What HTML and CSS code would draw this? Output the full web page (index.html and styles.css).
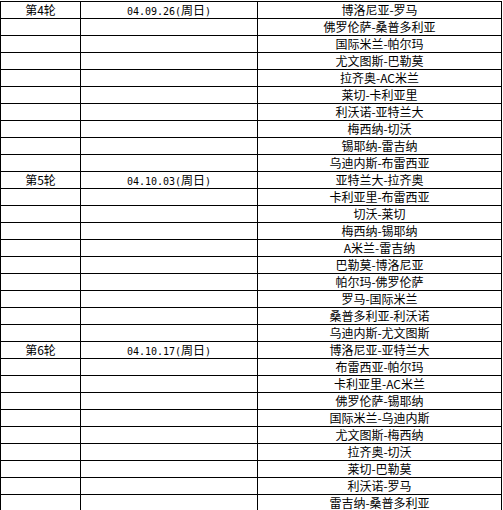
FILE: index.html
```html
<!DOCTYPE html>
<html lang="zh-CN">
<head>
<meta charset="utf-8">
<title>赛程</title>
<link rel="stylesheet" href="styles.css">
</head>
<body>
<table class="sched">
<colgroup><col class="c-round"><col class="c-date"><col class="c-match"></colgroup>
<tbody>
<tr><td>第4轮</td><td><span class="num">04.09.26(</span>周日<span class="num">)</span></td><td>博洛尼亚-罗马</td></tr>
<tr><td></td><td></td><td>佛罗伦萨-桑普多利亚</td></tr>
<tr><td></td><td></td><td>国际米兰-帕尔玛</td></tr>
<tr><td></td><td></td><td>尤文图斯-巴勒莫</td></tr>
<tr><td></td><td></td><td>拉齐奥-AC米兰</td></tr>
<tr><td></td><td></td><td>莱切-卡利亚里</td></tr>
<tr><td></td><td></td><td>利沃诺-亚特兰大</td></tr>
<tr><td></td><td></td><td>梅西纳-切沃</td></tr>
<tr><td></td><td></td><td>锡耶纳-雷吉纳</td></tr>
<tr><td></td><td></td><td>乌迪内斯-布雷西亚</td></tr>
<tr><td>第5轮</td><td><span class="num">04.10.03(</span>周日<span class="num">)</span></td><td>亚特兰大-拉齐奥</td></tr>
<tr><td></td><td></td><td>卡利亚里-布雷西亚</td></tr>
<tr><td></td><td></td><td>切沃-莱切</td></tr>
<tr><td></td><td></td><td>梅西纳-锡耶纳</td></tr>
<tr><td></td><td></td><td>A米兰-雷吉纳</td></tr>
<tr><td></td><td></td><td>巴勒莫-博洛尼亚</td></tr>
<tr><td></td><td></td><td>帕尔玛-佛罗伦萨</td></tr>
<tr><td></td><td></td><td>罗马-国际米兰</td></tr>
<tr><td></td><td></td><td>桑普多利亚-利沃诺</td></tr>
<tr><td></td><td></td><td>乌迪内斯-尤文图斯</td></tr>
<tr><td>第6轮</td><td><span class="num">04.10.17(</span>周日<span class="num">)</span></td><td>博洛尼亚-亚特兰大</td></tr>
<tr><td></td><td></td><td>布雷西亚-帕尔玛</td></tr>
<tr><td></td><td></td><td>卡利亚里-AC米兰</td></tr>
<tr><td></td><td></td><td>佛罗伦萨-锡耶纳</td></tr>
<tr><td></td><td></td><td>国际米兰-乌迪内斯</td></tr>
<tr><td></td><td></td><td>尤文图斯-梅西纳</td></tr>
<tr><td></td><td></td><td>拉齐奥-切沃</td></tr>
<tr><td></td><td></td><td>莱切-巴勒莫</td></tr>
<tr><td></td><td></td><td>利沃诺-罗马</td></tr>
<tr><td></td><td></td><td>雷吉纳-桑普多利亚</td></tr>
</tbody>
</table>
</body>
</html>
```
FILE: styles.css
```css
html, body {
  margin: 0;
  padding: 0;
  background: #fff;
}
body {
  padding-top: 1px;
}
.sched {
  border-collapse: collapse;
  table-layout: fixed;
  width: 501px;
  font-family: "Noto Sans CJK SC", "Liberation Sans", sans-serif;
  font-size: 12px;
  color: #000;
}
.c-round { width: 80px; }
.c-date { width: 177px; }
.c-match { width: 244px; }
.sched td {
  border: 1px solid #000;
  height: 16px;
  padding: 0;
  line-height: 16px;
  text-align: center;
  white-space: nowrap;
  overflow: hidden;
}
.sched .num {
  font-family: "DejaVu Sans Mono", "Liberation Mono", monospace;
  font-size: 10px;
  line-height: 10px;
}
```
